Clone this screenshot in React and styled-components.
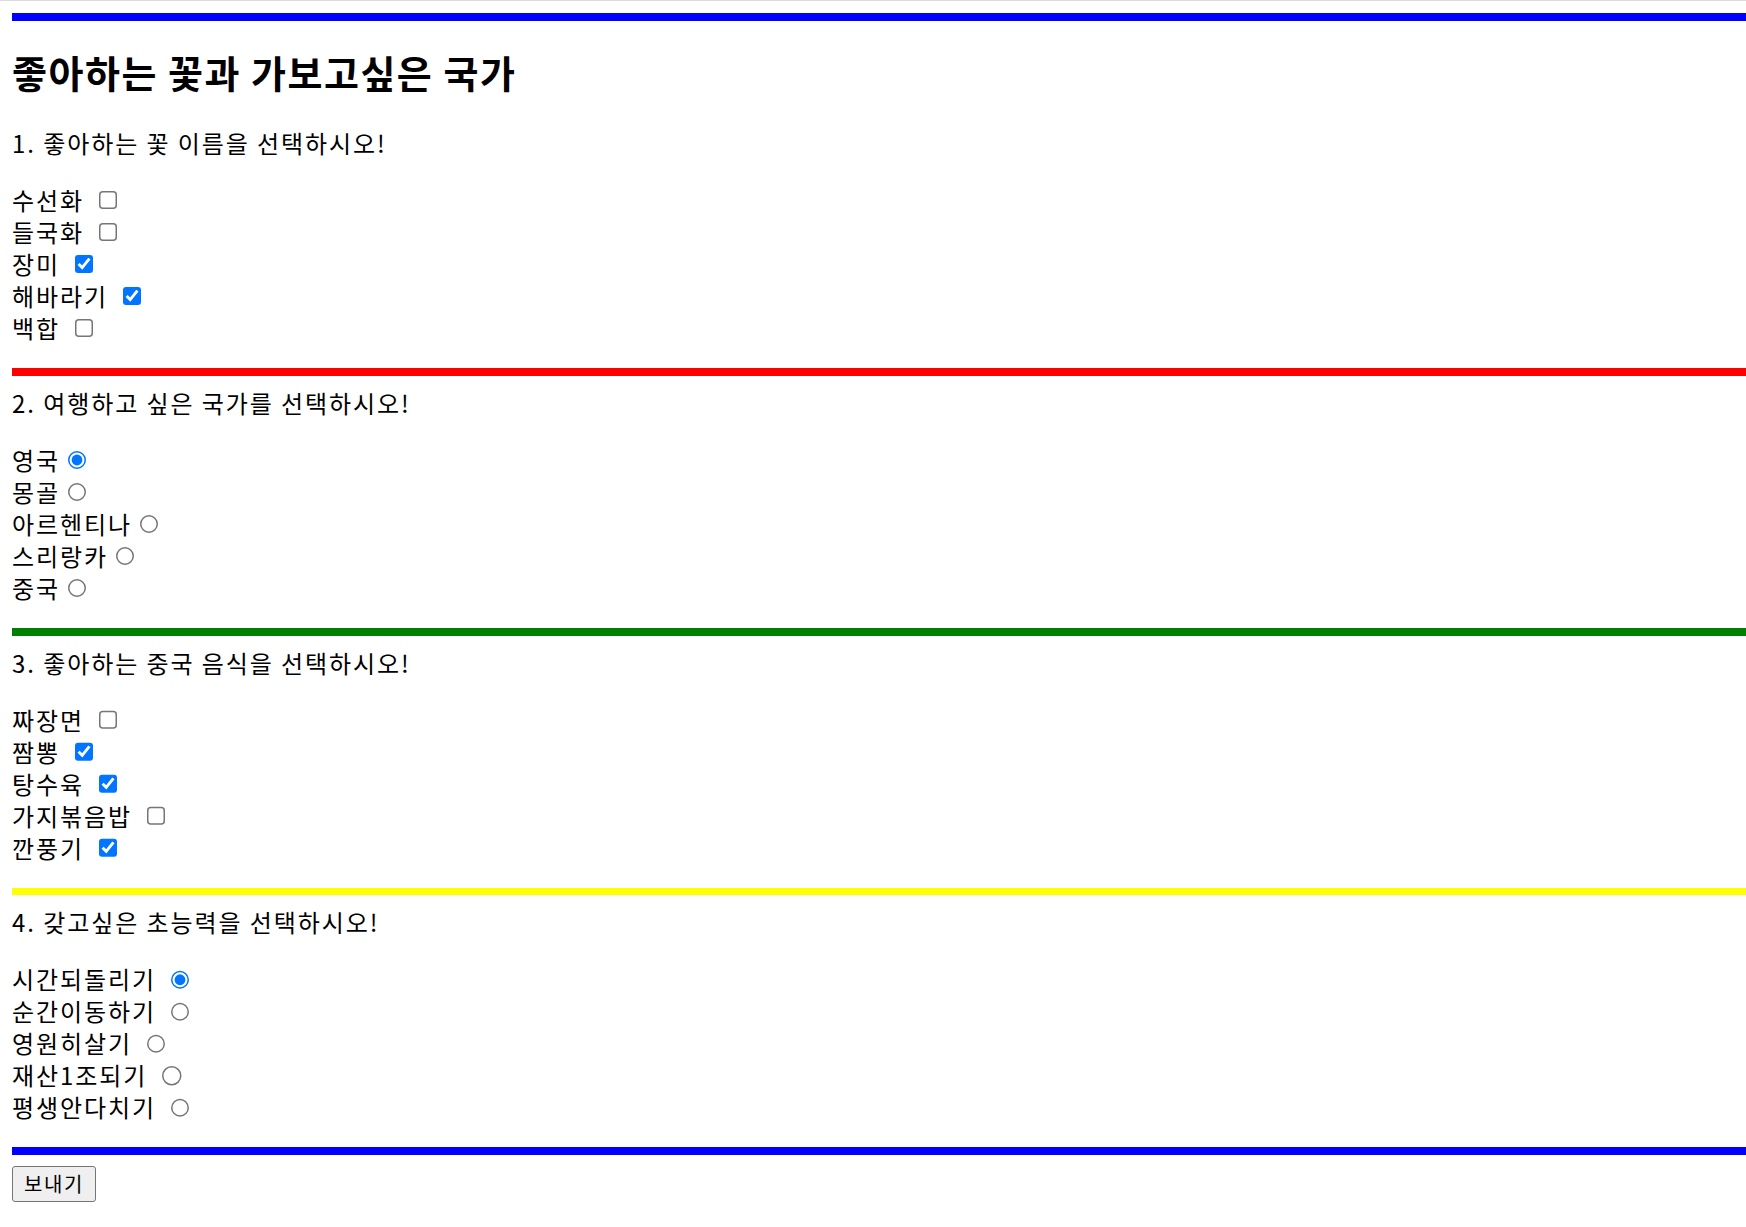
import React from "react";
import styled, { createGlobalStyle } from "styled-components";

const GlobalStyle = createGlobalStyle`
  html, body {
    margin: 0;
    padding: 0;
    background: #ffffff;
  }
  body {
    font-family: "Noto Sans CJK KR", "Noto Sans", sans-serif;
    color: #000000;
  }
`;

const Page = styled.div`
  border-top: 1px solid #dcdcdc;
  padding: 12px 0 0 12px;
  font-size: 24px;
  line-height: 32px;
  letter-spacing: 0.08em;
`;

const Rule = styled.div`
  height: 7.7px;
  margin: 12px 0 ${(p) => (p.$last ? "11px" : "12px")};
  background: ${(p) => p.$color};
  &:first-child {
    margin-top: 0;
  }
`;

const Title = styled.h2`
  font-size: 38px;
  line-height: 48px;
  font-weight: 700;
  letter-spacing: 1.5px;
  margin: 27px 0 32.5px;
`;

const Question = styled.div`
  margin: 0;
  line-height: 30px;
  height: 32px;
`;

const Options = styled.div`
  margin: 24px 0;
`;

const Option = styled.div`
  height: 32px;
  white-space: pre;
`;

const Choice = styled.input`
  zoom: 1.5;
  vertical-align: top;
  margin: ${(p) => (p.type === "radio" ? "4.5px 3px 0 5px" : "4.3px 3px 0 5px")};
`;

const SendButton = styled.button`
  display: block;
  width: 84px;
  height: 36px;
  padding: 0;
  font-family: "Noto Sans CJK KR", "Noto Sans", sans-serif;
  font-size: 20px;
  line-height: 26px;
  letter-spacing: 0.08em;
  color: #000;
  background: #efefef;
  border: 1.5px solid #767676;
  border-radius: 3px;
`;

const sections = [
  {
    color: "red",
    question: "1. 좋아하는 꽃 이름을 선택하시오!",
    type: "checkbox",
    name: "flower",
    spaced: true,
    items: [
      ["수선화", false],
      ["들국화", false],
      ["장미", true],
      ["해바라기", true],
      ["백합", false],
    ],
  },
  {
    color: "green",
    question: "2. 여행하고 싶은 국가를 선택하시오!",
    type: "radio",
    name: "country",
    spaced: false,
    items: [
      ["영국", true],
      ["몽골", false],
      ["아르헨티나", false],
      ["스리랑카", false],
      ["중국", false],
    ],
  },
  {
    color: "yellow",
    question: "3. 좋아하는 중국 음식을 선택하시오!",
    type: "checkbox",
    name: "food",
    spaced: true,
    items: [
      ["짜장면", false],
      ["짬뽕", true],
      ["탕수육", true],
      ["가지볶음밥", false],
      ["깐풍기", true],
    ],
  },
  {
    color: "blue",
    question: "4. 갖고싶은 초능력을 선택하시오!",
    type: "radio",
    name: "power",
    spaced: true,
    items: [
      ["시간되돌리기", true],
      ["순간이동하기", false],
      ["영원히살기", false],
      ["재산1조되기", false],
      ["평생안다치기", false],
    ],
  },
];

export default function App() {
  return (
    <>
      <GlobalStyle />
      <Page>
        <Rule $color="blue" />
        <Title>좋아하는 꽃과 가보고싶은 국가</Title>
        {sections.map((s, i) => (
          <React.Fragment key={s.name}>
            <Question>{s.question}</Question>
            <Options>
              {s.items.map(([label, checked]) => (
                <Option key={label}>
                  {label}
                  {s.spaced ? " " : ""}
                  <Choice type={s.type} name={s.name} defaultChecked={checked} />
                </Option>
              ))}
            </Options>
            <Rule $color={s.color} $last={i === sections.length - 1} />
          </React.Fragment>
        ))}
        <SendButton type="button">보내기</SendButton>
      </Page>
    </>
  );
}
